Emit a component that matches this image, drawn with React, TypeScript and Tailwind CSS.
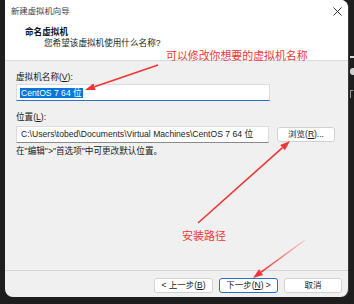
const ui = { fontFamily: '"Liberation Sans", "Noto Sans CJK SC", sans-serif' };

function Btn({ label, primary = false, w = "w-[59px]" }: { label: React.ReactNode; primary?: boolean; w?: string }) {
    return (
        <div className={`${w} h-[15px] flex items-center justify-center rounded-[3px] bg-white text-[8.5px] leading-none text-[#1a1a1a] border ${primary ? "border-[#2a6fc9]" : "border-[#d2d2d2]"}`}>
            {label}
        </div>
    );
}

function Arrows() {
    return (
        <svg className="absolute inset-0 pointer-events-none" width="354" height="304" viewBox="0 0 354 304">
            <defs>
                <linearGradient id="fade" x1="305" y1="240" x2="262" y2="272" gradientUnits="userSpaceOnUse">
                    <stop offset="0" stopColor="#f03434" stopOpacity="0.15" />
                    <stop offset="1" stopColor="#f03434" />
                </linearGradient>
            </defs>
            <line x1="158" y1="65" x2="94.5" y2="86.8" stroke="#f03434" strokeWidth="1.6" />
            <polygon points="85,90 95.6,90.1 93.4,83.4" fill="#f03434" />
            <line x1="198" y1="223" x2="282.5" y2="147.7" stroke="#f03434" strokeWidth="1.6" />
            <polygon points="290,141 284.9,150.3 280.2,145.1" fill="#f03434" />
            <line x1="305" y1="240" x2="261.1" y2="272.1" stroke="url(#fade)" strokeWidth="1.5" />
            <polygon points="253,278 263.1,274.9 259,269.3" fill="#f03434" />
        </svg>
    );
}

export default function App() {
    return (
        <div className="relative w-[354px] h-[304px] bg-[#1e1e1e] flex overflow-hidden" style={ui}>
            <div className="ml-[5px] w-[344px] h-[297px] flex flex-col bg-[#f0f0f0] rounded-tr-[8px] rounded-b-[8px] overflow-hidden border-r border-[#3a3a3a]">
                {/* title + header */}
                <div className="bg-white border-b border-[#dadada]">
                    <div className="h-[22px] flex items-center justify-between pl-[6px] pr-[5px]">
                        <span className="text-[8.4px] text-[#3c3c3c] leading-none">新建虚拟机向导</span>
                        <svg width="9" height="9" viewBox="0 0 9 9" className="mr-[1px]">
                            <path d="M0.5 0.5 L8.5 8.5 M8.5 0.5 L0.5 8.5" stroke="#333" strokeWidth="1" />
                        </svg>
                    </div>
                    <div className="h-[38px] pt-[5px] pl-[20px]">
                        <div className="text-[8.6px] leading-[11px] font-bold text-[#111]">命名虚拟机</div>
                        <div className="text-[8.6px] leading-[11px] text-[#222] pl-[19px]">您希望该虚拟机使用什么名称?</div>
                    </div>
                </div>

                {/* body */}
                <div className="flex-1 pl-[11px] pt-[11px] text-[8.6px] leading-[11px] text-[#1a1a1a]">
                    <div>
                        虚拟机名称(<span className="underline">V</span>):
                    </div>
                    <div className="mt-[1px] w-[254px] h-[17px] bg-white border border-[#dcdcdc] border-b-[#2a6fc9] border-b-[1.5px] flex items-center pl-[3px]">
                        <span className="bg-[#0078d7] text-white px-[1px] leading-[10px]">CentOS 7 64 位</span>
                    </div>
                    <div className="mt-[11px]">
                        位置(<span className="underline">L</span>):
                    </div>
                    <div className="mt-[3px] flex items-center gap-[8px]">
                        <div className="w-[253px] h-[17px] bg-white border border-[#dcdcdc] border-b-[#8a8a8a] flex items-center pl-[4px] whitespace-nowrap overflow-hidden">
                            C:\Users\tobed\Documents\Virtual Machines\CentOS 7 64 位
                        </div>
                        <Btn label={<>浏览(<span className="underline">R</span>)...</>} w="w-[58px]" />
                    </div>
                    <div className="mt-[3px]">在"编辑"&gt;"首选项"中可更改默认位置。</div>
                </div>

                {/* footer */}
                <div className="h-[27px] border-t border-[#d4d4d4] pt-[7px] pr-[6px] flex justify-end gap-[6px]">
                    <Btn label={<>&lt; 上一步(<span className="underline">B</span>)</>} />
                    <Btn label={<>下一步(<span className="underline">N</span>) &gt;</>} primary />
                    <Btn label="取消" w="w-[58px]" />
                </div>
            </div>

            {/* sliver of what lies behind */}
            <div className="flex-1 relative overflow-hidden">
                <div className="absolute left-[1px] top-[56px] w-[4px] h-[2px] bg-[#d8d8d8]" />
                <div className="absolute left-[1px] top-[68px] w-[6px] h-[7px] rounded-full bg-[#cfcfcf]" />
                <div className="absolute left-[1px] top-[90px] w-[3px] h-[8px] border-l border-t border-[#9a9a9a]" />
            </div>

            {/* annotations */}
            <div className="absolute left-[166px] top-[47px] text-[10.9px] leading-[16px] text-[#f03434]" style={{ fontFamily: '"Noto Sans CJK SC", sans-serif' }}>
                可以修改你想要的虚拟机名称
            </div>
            <div className="absolute left-[182px] top-[227px] text-[11px] leading-[16px] text-[#f03434]" style={{ fontFamily: '"Noto Sans CJK SC", sans-serif' }}>
                安装路径
            </div>
            <Arrows />
        </div>
    );
}
